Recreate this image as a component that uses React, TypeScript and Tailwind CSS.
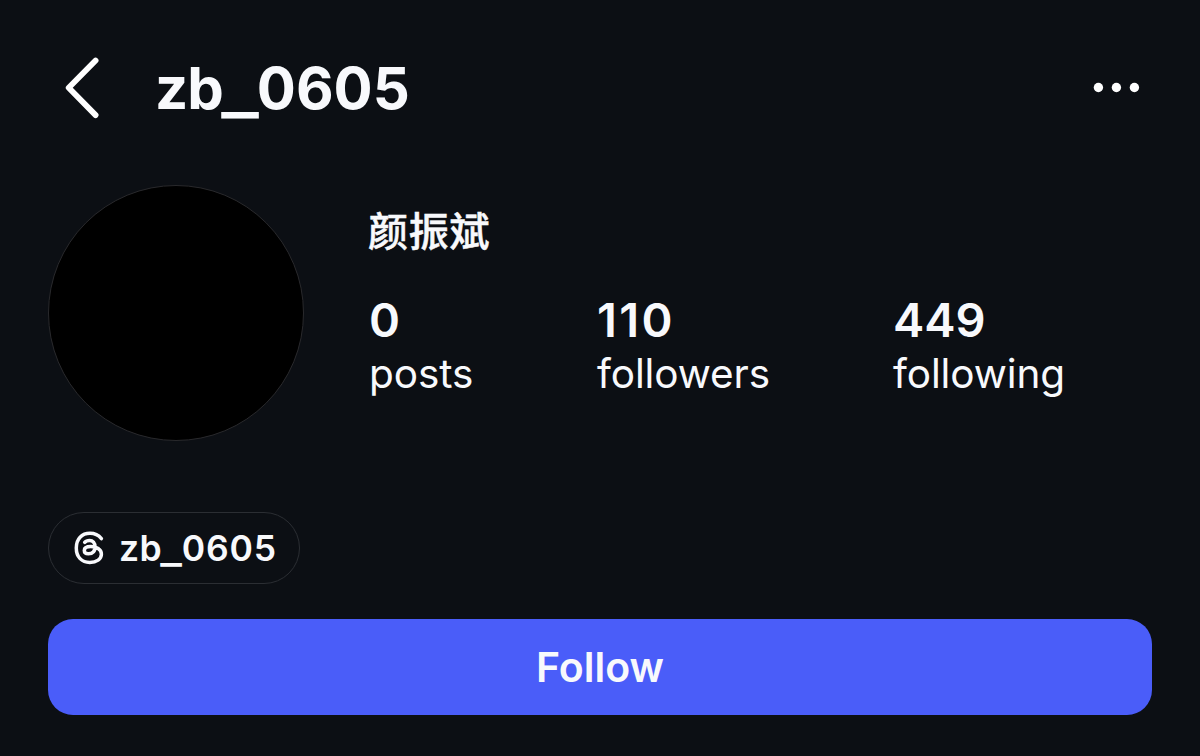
interface Stat {
  value: string;
  label: string;
  className: string;
  valueClassName: string;
}

const stats: Stat[] = [
  { value: "0", label: "posts", className: "w-[228px]", valueClassName: "" },
  { value: "110", label: "followers", className: "w-[296px]", valueClassName: "tracking-[2.4px]" },
  { value: "449", label: "following", className: "", valueClassName: "" },
];

function BackIcon() {
  return (
    <svg width="36" height="64" viewBox="0 0 36 64" fill="none" stroke="currentColor" strokeWidth="5.8" strokeLinecap="round" strokeLinejoin="round">
      <path d="M31.6 4.5 4.7 31.8 31.6 59.1" />
    </svg>
  );
}

function MoreIcon() {
  return (
    <svg width="48" height="12" viewBox="0 0 48 12" fill="currentColor">
      <circle cx="6.4" cy="5.5" r="4.7" />
      <circle cx="24.4" cy="5.5" r="4.7" />
      <circle cx="42.4" cy="5.5" r="4.7" />
    </svg>
  );
}

function ThreadsIcon() {
  return (
    <svg width="30" height="34" viewBox="0 0 30 34" fill="none" stroke="currentColor" strokeWidth="3.5" strokeLinecap="round" strokeLinejoin="round">
      <path d="M27.4 7.6C24.6 4.2 20.8 2.3 16 2.3 7.8 2.3 2.3 7.8 2.3 17S7.8 31.4 15.8 31.4C22.6 31.4 27.4 28 27.4 23.2 27.4 18.2 22.3 15.6 16.8 15.6 12.6 15.6 10.3 17.1 10.3 19.4 10.3 21.6 12 22.8 14.4 22.8 18.6 22.8 21 20.4 21 15.8 21 11.8 18.8 9.4 15.6 9.4 13.4 9.4 11.6 10.2 10.7 11.4" />
    </svg>
  );
}

export default function App() {
  return (
    <main className="h-[756px] w-[1200px] overflow-hidden bg-[#0c0f14] px-12 pt-[52px] font-['Inter','Noto_Sans_CJK_SC',sans-serif] text-[#f8f9fc]">
      {/* Header */}
      <header className="flex h-[72px] items-center">
        <button className="ml-4 text-white" aria-label="Back">
          <BackIcon />
        </button>
        <h1 className="ml-[55px] text-[58px] leading-[72px] font-bold">
          <span className="tracking-[-1px]">zb</span>
          <span className="inline-block w-[34px] translate-y-[3px] scale-x-[1.36] text-center">_</span>
          <span>0605</span>
        </h1>
        <button className="mr-3 ml-auto text-white" aria-label="More">
          <MoreIcon />
        </button>
      </header>

      {/* Profile */}
      <section className="mt-[61px] flex">
        <div className="size-[256px] shrink-0 rounded-full border-[1.5px] border-[#29292c] bg-black" />
        <div className="ml-16 pt-[22px]">
          <h2 className="text-[40px] leading-[50px] font-medium tracking-[0.8px] [-webkit-text-stroke:0.5px_#f8f9fc]">颜振斌</h2>
          <div className="mt-[35px] ml-px flex">
            {stats.map((stat) => (
              <div key={stat.label} className={stat.className}>
                <div className={`text-[47px] leading-[56px] font-semibold ${stat.valueClassName}`}>{stat.value}</div>
                <div className="text-[40.5px] leading-[52px] tracking-[-0.1px]">{stat.label}</div>
              </div>
            ))}
          </div>
        </div>
      </section>

      {/* Threads badge */}
      <a className="mt-[71px] flex h-[72px] w-[252px] items-center rounded-full border-[1.5px] border-[#2b2e33] pl-[25px]">
        <ThreadsIcon />
        <span className="ml-[15px] pt-0.5 text-[35.5px] leading-none font-semibold">
          <span className="tracking-[0.3px]">zb</span>
          <span className="inline-block w-[20px] -translate-x-px translate-y-[2px] scale-x-[1.3] text-center">_</span>
          <span className="tracking-[0.8px]">0605</span>
        </span>
      </a>

      <button className="mt-[35px] flex h-24 w-full items-center justify-center rounded-[25px] bg-[#4a5df9] pt-0.5 text-[41px] font-semibold">
        Follow
      </button>
    </main>
  );
}
